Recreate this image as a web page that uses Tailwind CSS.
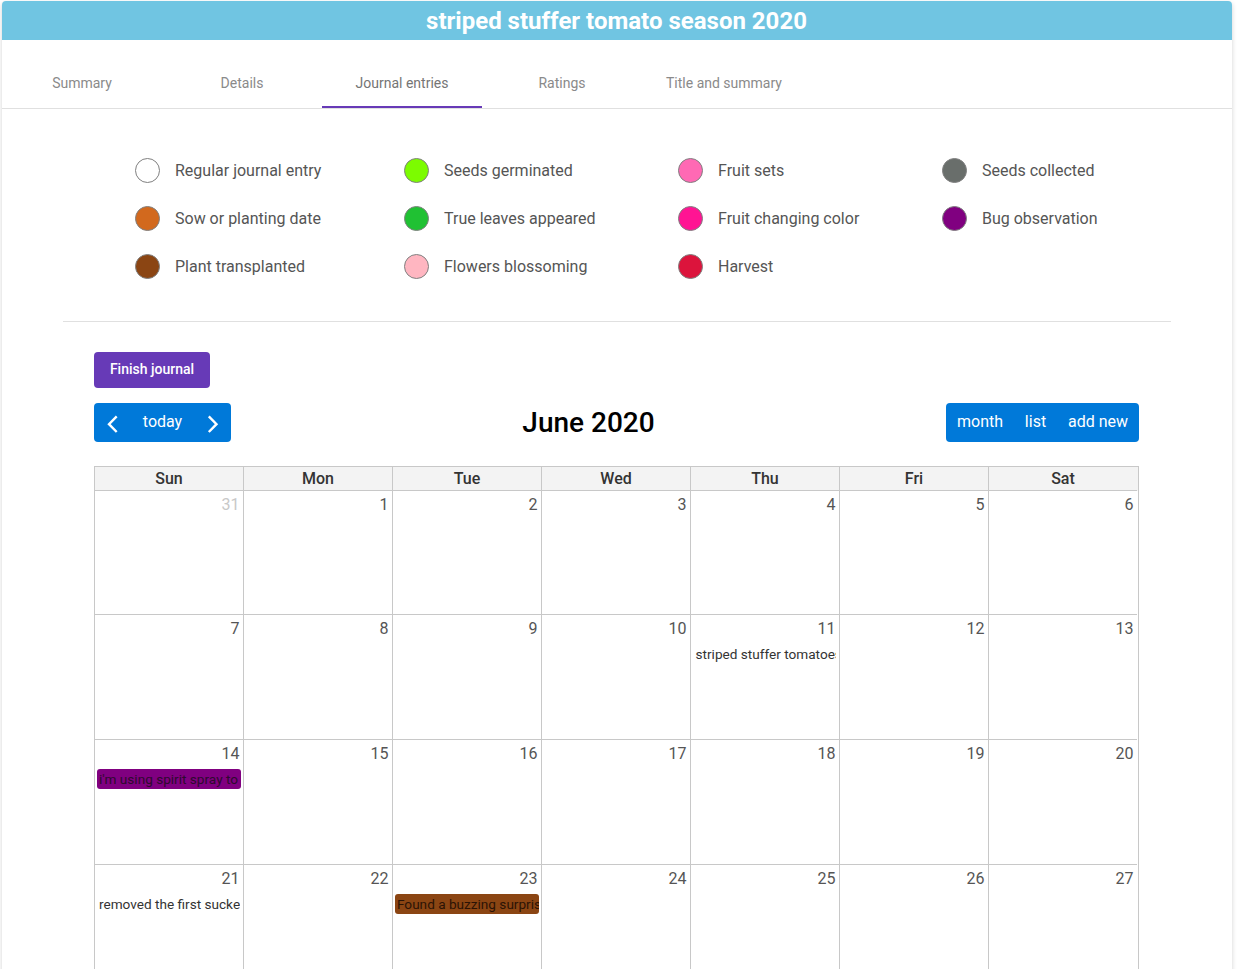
<!DOCTYPE html>
<html>
<head>
<meta charset="utf-8">
<script src="https://cdn.jsdelivr.net/npm/@tailwindcss/browser@4"></script>
</head>
<body class="bg-white font-['Roboto',sans-serif]">
<div class="h-[969px] overflow-hidden pt-px pl-[2px] pr-[11px]">
<div class="bg-white rounded-t-[4px] shadow-[0_2px_5px_rgba(0,0,0,0.18)] h-[1100px]">
  <div class="h-[39px] pr-[1px] bg-[#70c5e2] rounded-t-[4px] flex items-center justify-center text-white font-bold text-[24px]">striped stuffer tomato season 2020</div>
  <div class="h-[69px] pt-[20px] border-b border-[#e0e0e0] flex text-[14px] text-[#8a8a8a]">
    <div class="w-[160px] h-[48px] flex items-center justify-center border-b-2 border-transparent">Summary</div>
    <div class="w-[160px] h-[48px] flex items-center justify-center border-b-2 border-transparent">Details</div>
    <div class="w-[160px] h-[48px] flex items-center justify-center border-b-2 border-[#673ab7] text-[#757575]">Journal entries</div>
    <div class="w-[160px] h-[48px] flex items-center justify-center border-b-2 border-transparent">Ratings</div>
    <div class="w-[164px] h-[48px] flex items-center justify-center border-b-2 border-transparent">Title and summary</div>
  </div>
  <div class="mx-[61px] h-[213px] border-b border-[#e0e0e0] pt-[37px] pl-[72px] flex text-[16px] text-[#555]">
    <div class="w-[269px] flex flex-col">
      <div class="h-[48px] flex items-center gap-[15px]"><span class="w-[25px] h-[25px] rounded-full border border-[#808080] bg-white"></span><span class="mt-[2px]">Regular journal entry</span></div>
      <div class="h-[48px] flex items-center gap-[15px]"><span class="w-[25px] h-[25px] rounded-full border border-[#808080] bg-[#d2691e]"></span><span class="mt-[2px]">Sow or planting date</span></div>
      <div class="h-[48px] flex items-center gap-[15px]"><span class="w-[25px] h-[25px] rounded-full border border-[#808080] bg-[#8b4513]"></span><span class="mt-[2px]">Plant transplanted</span></div>
    </div>
    <div class="w-[274px] flex flex-col">
      <div class="h-[48px] flex items-center gap-[15px]"><span class="w-[25px] h-[25px] rounded-full border border-[#808080] bg-[#7cfc00]"></span><span class="mt-[2px]">Seeds germinated</span></div>
      <div class="h-[48px] flex items-center gap-[15px]"><span class="w-[25px] h-[25px] rounded-full border border-[#808080] bg-[#20c133]"></span><span class="mt-[2px]">True leaves appeared</span></div>
      <div class="h-[48px] flex items-center gap-[15px]"><span class="w-[25px] h-[25px] rounded-full border border-[#808080] bg-[#ffb6c1]"></span><span class="mt-[2px]">Flowers blossoming</span></div>
    </div>
    <div class="w-[264px] flex flex-col">
      <div class="h-[48px] flex items-center gap-[15px]"><span class="w-[25px] h-[25px] rounded-full border border-[#808080] bg-[#ff69b4]"></span><span class="mt-[2px]">Fruit sets</span></div>
      <div class="h-[48px] flex items-center gap-[15px]"><span class="w-[25px] h-[25px] rounded-full border border-[#808080] bg-[#ff1493]"></span><span class="mt-[2px]">Fruit changing color</span></div>
      <div class="h-[48px] flex items-center gap-[15px]"><span class="w-[25px] h-[25px] rounded-full border border-[#808080] bg-[#dc143c]"></span><span class="mt-[2px]">Harvest</span></div>
    </div>
    <div class="flex flex-col">
      <div class="h-[48px] flex items-center gap-[15px]"><span class="w-[25px] h-[25px] rounded-full border border-[#808080] bg-[#696e6b]"></span><span class="mt-[2px]">Seeds collected</span></div>
      <div class="h-[48px] flex items-center gap-[15px]"><span class="w-[25px] h-[25px] rounded-full border border-[#808080] bg-[#800080]"></span><span class="mt-[2px]">Bug observation</span></div>
    </div>
  </div>
  <div class="pl-[92px] pt-[30px] w-[1137px]">
    <div class="w-[116px] h-[36px] pb-[2px] rounded-[4px] bg-[#673ab7] text-white text-[14px] font-medium flex items-center justify-center">Finish journal</div>
    <div class="mt-[15px] h-[39px] flex items-center justify-between">
      <div class="w-[137px] h-[39px] rounded-[4px] bg-[#0079d9] text-white text-[16px] flex items-center justify-between px-[12px]">
        <svg class="w-[13px] h-[20px] mt-[2px]" viewBox="0 0 13 20" fill="none" stroke="white" stroke-width="2.4"><path d="M10.7 2.4 3 10.2 10.7 18"/></svg>
        <span class="mb-[2px]">today</span>
        <svg class="w-[13px] h-[20px] mt-[2px]" viewBox="0 0 13 20" fill="none" stroke="white" stroke-width="2.4"><path d="M2.8 2.4 10.5 10.2 2.8 18"/></svg>
      </div>
      <div class="text-[28px] font-medium text-black">June 2020</div>
      <div class="w-[193px] h-[39px] pb-[2px] rounded-[4px] bg-[#0079d9] text-white text-[16px] flex items-center justify-between px-[11px]">
        <span>month</span><span>list</span><span>add new</span>
      </div>
    </div>
    <div class="mt-[24px] w-[1045px] border-t border-r border-[#c8c8c8]">
      <div class="grid grid-cols-[repeat(7,149px)] h-[24px] bg-[#f3f3f3] text-[16px] font-medium text-[#333] text-center leading-[23px]">
        <div class="border-l border-b border-[#c8c8c8]">Sun</div>
        <div class="border-l border-b border-[#c8c8c8]">Mon</div>
        <div class="border-l border-b border-[#c8c8c8]">Tue</div>
        <div class="border-l border-b border-[#c8c8c8]">Wed</div>
        <div class="border-l border-b border-[#c8c8c8]">Thu</div>
        <div class="border-l border-b border-[#c8c8c8]">Fri</div>
        <div class="border-l border-b border-[#c8c8c8]">Sat</div>
      </div>
      <div class="grid grid-cols-[repeat(7,149px)] grid-rows-[124px_125px_125px_125px] text-[16px] text-[#555] text-right leading-[24px]">
        <div class="border-l border-b border-[#c8c8c8] pt-[2px] pr-[3.5px] text-[#c8c8c8]">31</div>
        <div class="border-l border-b border-[#c8c8c8] pt-[2px] pr-[3.5px]">1</div>
        <div class="border-l border-b border-[#c8c8c8] pt-[2px] pr-[3.5px]">2</div>
        <div class="border-l border-b border-[#c8c8c8] pt-[2px] pr-[3.5px]">3</div>
        <div class="border-l border-b border-[#c8c8c8] pt-[2px] pr-[3.5px]">4</div>
        <div class="border-l border-b border-[#c8c8c8] pt-[2px] pr-[3.5px]">5</div>
        <div class="border-l border-b border-[#c8c8c8] pt-[2px] pr-[3.5px]">6</div>

        <div class="border-l border-b border-[#c8c8c8] pt-[2px] pr-[3.5px]">7</div>
        <div class="border-l border-b border-[#c8c8c8] pt-[2px] pr-[3.5px]">8</div>
        <div class="border-l border-b border-[#c8c8c8] pt-[2px] pr-[3.5px]">9</div>
        <div class="border-l border-b border-[#c8c8c8] pt-[2px] pr-[3.5px]">10</div>
        <div class="border-l border-b border-[#c8c8c8] pt-[2px]"><div class="pr-[3.5px]">11</div><div class="mt-[3px] ml-[2px] mr-[3px] h-[20px] pl-[2.5px] overflow-hidden whitespace-nowrap text-left text-[13.6px] leading-[20px] text-[#333]">striped stuffer tomatoes</div></div>
        <div class="border-l border-b border-[#c8c8c8] pt-[2px] pr-[3.5px]">12</div>
        <div class="border-l border-b border-[#c8c8c8] pt-[2px] pr-[3.5px]">13</div>

        <div class="border-l border-b border-[#c8c8c8] pt-[2px]"><div class="pr-[3.5px]">14</div><div class="mt-[3px] mx-[2px] h-[20px] px-[2px] rounded-[3px] bg-[#800080] overflow-hidden whitespace-nowrap text-left text-[13.6px] leading-[20px] text-[#2e0a2e]">i'm using spirit spray to</div></div>
        <div class="border-l border-b border-[#c8c8c8] pt-[2px] pr-[3.5px]">15</div>
        <div class="border-l border-b border-[#c8c8c8] pt-[2px] pr-[3.5px]">16</div>
        <div class="border-l border-b border-[#c8c8c8] pt-[2px] pr-[3.5px]">17</div>
        <div class="border-l border-b border-[#c8c8c8] pt-[2px] pr-[3.5px]">18</div>
        <div class="border-l border-b border-[#c8c8c8] pt-[2px] pr-[3.5px]">19</div>
        <div class="border-l border-b border-[#c8c8c8] pt-[2px] pr-[3.5px]">20</div>

        <div class="border-l border-b border-[#c8c8c8] pt-[2px]"><div class="pr-[3.5px]">21</div><div class="mt-[3px] ml-[2px] mr-[3px] h-[20px] pl-[2px] overflow-hidden whitespace-nowrap text-left text-[13.6px] leading-[20px] text-[#333]">removed the first suckers</div></div>
        <div class="border-l border-b border-[#c8c8c8] pt-[2px] pr-[3.5px]">22</div>
        <div class="border-l border-b border-[#c8c8c8] pt-[2px]"><div class="pr-[3.5px]">23</div><div class="mt-[3px] mx-[2px] h-[20px] pl-[2px] rounded-[3px] bg-[#8b4513] overflow-hidden whitespace-nowrap text-left text-[13.6px] leading-[20px] text-[#2b1305]">Found a buzzing surprise</div></div>
        <div class="border-l border-b border-[#c8c8c8] pt-[2px] pr-[3.5px]">24</div>
        <div class="border-l border-b border-[#c8c8c8] pt-[2px] pr-[3.5px]">25</div>
        <div class="border-l border-b border-[#c8c8c8] pt-[2px] pr-[3.5px]">26</div>
        <div class="border-l border-b border-[#c8c8c8] pt-[2px] pr-[3.5px]">27</div>
      </div>
    </div>
  </div>
</div>
</div>
</body>
</html>
